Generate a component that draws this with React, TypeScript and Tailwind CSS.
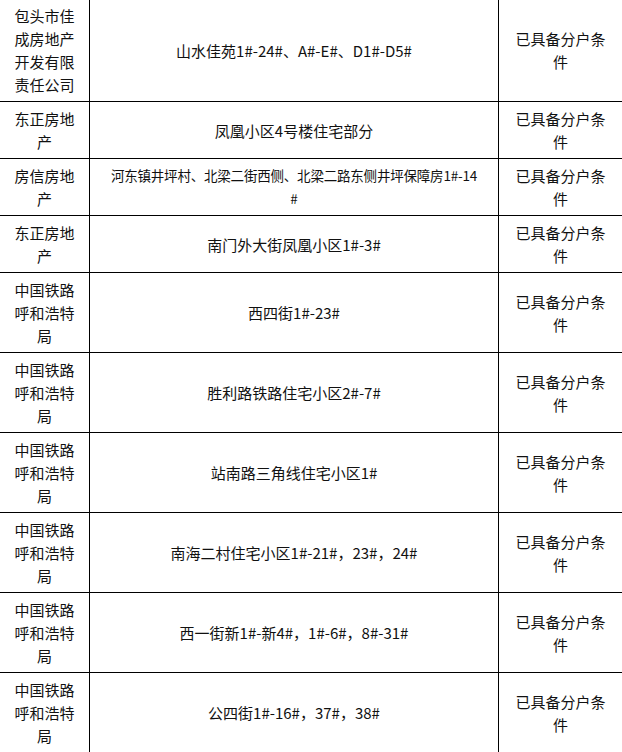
const rows: { owner: string; project: React.ReactNode; small?: boolean }[] = [
  { owner: "包头市佳成房地产开发有限责任公司", project: "山水佳苑1#-24#、A#-E#、D1#-D5#" },
  { owner: "东正房地产", project: "凤凰小区4号楼住宅部分" },
  {
    owner: "房信房地产",
    project: (
      <>
        河东镇井坪村、北梁二街西侧、北梁二路东侧井坪保障房1#-14
        <br />#
      </>
    ),
    small: true
  },
  { owner: "东正房地产", project: "南门外大街凤凰小区1#-3#" },
  { owner: "中国铁路呼和浩特局", project: "西四街1#-23#" },
  { owner: "中国铁路呼和浩特局", project: "胜利路铁路住宅小区2#-7#" },
  { owner: "中国铁路呼和浩特局", project: "站南路三角线住宅小区1#" },
  { owner: "中国铁路呼和浩特局", project: "南海二村住宅小区1#-21#，23#，24#" },
  { owner: "中国铁路呼和浩特局", project: "西一街新1#-新4#，1#-6#，8#-31#" },
  { owner: "中国铁路呼和浩特局", project: "公四街1#-16#，37#，38#" }
];

export default function App() {
  return (
    <div className="h-[752px] w-[622px] overflow-hidden bg-white font-['Noto_Sans_CJK_SC',sans-serif] text-[15px] leading-[23px] text-[#111]">
      <div className="-mt-px flex flex-col">
        {rows.map((row, i) => (
          <div key={i} className="flex border-b border-black">
            <div className="flex w-[90px] shrink-0 items-center justify-center border-r border-black px-[10px] py-[5px] text-center">
              {row.owner}
            </div>
            <div
              className={
                row.small
                  ? "flex w-[409px] shrink-0 items-center justify-center border-r border-black px-[8px] py-[5px] text-center text-[13.5px] tracking-[-0.2px]"
                  : "flex w-[409px] shrink-0 items-center justify-center border-r border-black px-[10px] py-[5px] text-center"
              }
            >
              <span>{row.project}</span>
            </div>
            <div className="flex flex-1 items-center justify-center px-[10px] py-[5px] text-center">
              已具备分户条件
            </div>
          </div>
        ))}
      </div>
    </div>
  );
}
